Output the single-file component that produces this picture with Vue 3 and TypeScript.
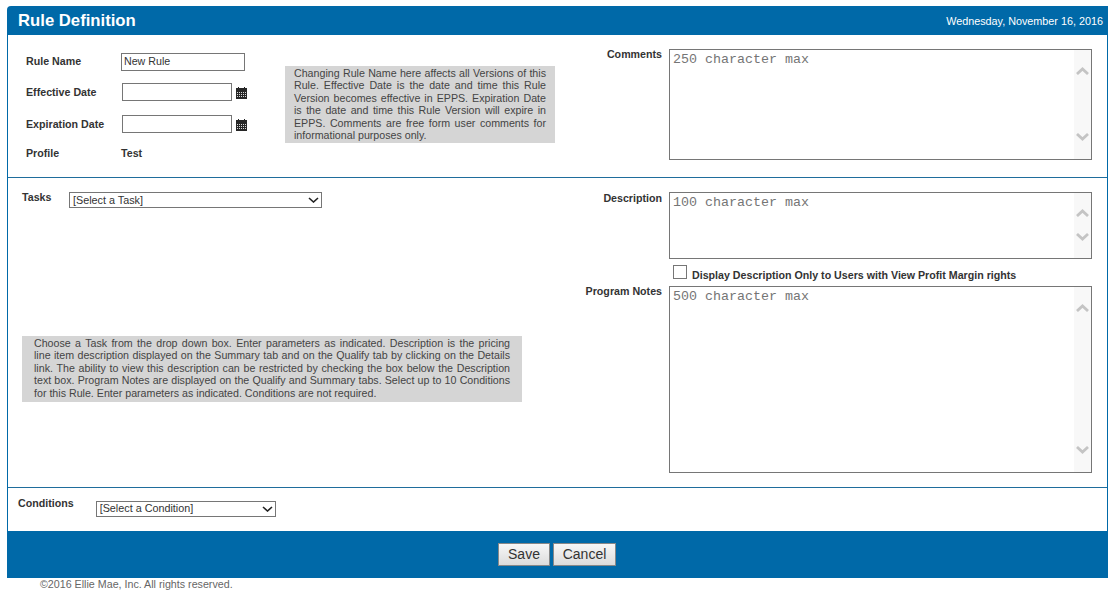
<script setup lang="ts">
const calendarCols: number[] = [1, 3, 5, 7, 9];
const calendarRows: number[] = [5, 7, 9];
const ruleNote: string[] = [
  "Changing Rule Name here affects all Versions of this",
  "Rule. Effective Date is the date and time this Rule",
  "Version becomes effective in EPPS. Expiration Date",
  "is the date and time this Rule Version will expire in",
  "EPPS. Comments are free form user comments for",
  "informational purposes only.",
];
const taskNote: string[] = [
  "Choose a Task from the drop down box. Enter parameters as indicated. Description is the pricing",
  "line item description displayed on the Summary tab and on the Qualify tab by clicking on the Details",
  "link. The ability to view this description can be restricted by checking the box below the Description",
  "text box. Program Notes are displayed on the Qualify and Summary tabs. Select up to 10 Conditions",
  "for this Rule. Enter parameters as indicated. Conditions are not required.",
];
</script>

<template>
  <div class="page">
    <header class="titlebar">
      <h1>Rule Definition</h1>
      <span class="date">Wednesday, November 16, 2016</span>
    </header>

    <div class="panel">
      <section class="sec sec-rule">
        <div class="rule-form">
          <div class="row row-name">
            <label class="lab">Rule Name</label>
            <input class="inp inp-name" value="New Rule" />
          </div>
          <div class="row row-date">
            <label class="lab">Effective Date</label>
            <input class="inp inp-date" />
            <svg class="cal" width="11" height="12" viewBox="0 0 11 12">
              <rect x="2" y="0" width="1" height="2" fill="#222" />
              <rect x="8" y="0" width="1" height="2" fill="#222" />
              <rect x="0" y="1" width="11" height="11" fill="#262626" />
              <template v-for="c in calendarCols" :key="c">
                <rect v-for="r in calendarRows" :key="r" :x="c" :y="r" width="1" height="1" fill="#d8d8d8" />
              </template>
            </svg>
          </div>
          <div class="row row-date">
            <label class="lab">Expiration Date</label>
            <input class="inp inp-date" />
            <svg class="cal" width="11" height="12" viewBox="0 0 11 12">
              <rect x="2" y="0" width="1" height="2" fill="#222" />
              <rect x="8" y="0" width="1" height="2" fill="#222" />
              <rect x="0" y="1" width="11" height="11" fill="#262626" />
              <template v-for="c in calendarCols" :key="c">
                <rect v-for="r in calendarRows" :key="r" :x="c" :y="r" width="1" height="1" fill="#d8d8d8" />
              </template>
            </svg>
          </div>
          <div class="row row-profile">
            <span class="lab">Profile</span>
            <span class="val">Test</span>
          </div>
        </div>

        <p class="note note-rule"><span v-for="line in ruleNote" :key="line" class="line">{{ line }}</span></p>

        <div class="field field-comments">
          <label class="side-lab">Comments</label>
          <div class="tbox tbox-comments">
            <textarea placeholder="250 character max"></textarea>
            <div class="sbar">
              <svg width="13" height="8" viewBox="0 0 13 8"><path d="M1 7 L6.5 2 L12 7" /></svg>
              <svg width="13" height="8" viewBox="0 0 13 8"><path d="M1 1 L6.5 6 L12 1" /></svg>
            </div>
          </div>
        </div>
      </section>

      <section class="sec sec-task">
        <div class="task-left">
          <div class="task-top">
            <label class="lab">Tasks</label>
            <div class="sel sel-task">
              <select><option>[Select a Task]</option></select>
              <svg class="chev" width="11" height="6" viewBox="0 0 11 6"><path d="M1 1 L5.5 5 L10 1" /></svg>
            </div>
          </div>
          <p class="note note-task"><span v-for="line in taskNote" :key="line" class="line">{{ line }}</span></p>
        </div>

        <div class="task-right">
          <div class="field">
            <label class="side-lab side-lab-desc">Description</label>
            <div class="tbox tbox-desc">
              <textarea placeholder="100 character max"></textarea>
              <div class="sbar">
                <svg width="13" height="8" viewBox="0 0 13 8"><path d="M1 7 L6.5 2 L12 7" /></svg>
                <svg width="13" height="8" viewBox="0 0 13 8"><path d="M1 1 L6.5 6 L12 1" /></svg>
              </div>
            </div>
          </div>
          <label class="check">
            <input type="checkbox" />
            <span>Display Description Only to Users with View Profit Margin rights</span>
          </label>
          <div class="field">
            <label class="side-lab">Program Notes</label>
            <div class="tbox tbox-notes">
              <textarea placeholder="500 character max"></textarea>
              <div class="sbar">
                <svg width="13" height="8" viewBox="0 0 13 8"><path d="M1 7 L6.5 2 L12 7" /></svg>
                <svg width="13" height="8" viewBox="0 0 13 8"><path d="M1 1 L6.5 6 L12 1" /></svg>
              </div>
            </div>
          </div>
        </div>
      </section>

      <section class="sec-cond">
        <label class="lab">Conditions</label>
        <div class="sel sel-cond">
          <select><option>[Select a Condition]</option></select>
          <svg class="chev" width="11" height="6" viewBox="0 0 11 6"><path d="M1 1 L5.5 5 L10 1" /></svg>
        </div>
      </section>
    </div>

    <footer class="actions">
      <button type="button" class="btn btn-save">Save</button>
      <button type="button" class="btn btn-cancel">Cancel</button>
    </footer>
    <p class="copy">©2016 Ellie Mae, Inc. All rights reserved.</p>
  </div>
</template>

<style>
html, body { margin: 0; background: #fff; }
</style>

<style scoped>
.page {
  width: 1101px;
  margin-left: 7px;
  padding-top: 6px;
  font-family: "Liberation Sans", Arial, sans-serif;
  color: #333;
}
.titlebar {
  height: 29px;
  background: #0069a8;
  border-top-left-radius: 4px;
  display: flex;
  align-items: center;
  justify-content: space-between;
  padding: 0 5px 0 11px;
  color: #fff;
}
.titlebar h1 { margin: 0; font-size: 16.7px; font-weight: bold; }
.date { font-size: 10.8px; }
.panel {
  border-left: 1px solid #0069a8;
  border-right: 1px solid #0069a8;
}
.sec { display: flex; border-bottom: 1px solid #1f6d9c; }
.sec-rule { height: 142px; position: relative; }
.rule-form { width: 277px; flex: none; padding: 18px 0 0 18px; box-sizing: border-box; }
.row { display: flex; align-items: center; }
.lab { font-size: 10.67px; font-weight: bold; color: #333; }
.row .lab { width: 96px; flex: none; }
.row-name { height: 18px; }
.row-name .lab { margin-bottom: 2px; }
.row-date { height: 18px; margin-top: 12px; }
.row-date + .row-date { margin-top: 14px; }
.row-profile { margin-top: 13px; height: 14px; }
.row-profile .lab { width: 95px; }
.val { font-size: 10.67px; font-weight: bold; color: #333; }
.inp {
  box-sizing: border-box;
  height: 18px;
  border: 1px solid #767676;
  padding: 0 2px 2px;
  font: 10.67px "Liberation Sans", Arial, sans-serif;
  color: #333;
  outline: none;
  background: #fff;
}
.inp-name { width: 124px; margin-left: -1px; }
.inp-date { width: 110px; }
.cal { margin-left: 4px; margin-top: 2px; flex: none; }
.note {
  margin: 0;
  background: #d5d5d5;
  font-size: 10.67px;
  line-height: 12.4px;
  color: #444;
  box-sizing: border-box;
}
.line { display: block; text-align: justify; text-align-last: justify; white-space: normal; }
.line:last-child { text-align-last: left; }
.note-rule {
  width: 270px;
  height: 77px;
  margin-top: 31px;
  padding: 1px 9px 0;
  flex: none;
}
.field-comments { margin: 14px 0 0 auto; padding-right: 15px; }
.field { display: flex; justify-content: flex-end; align-items: flex-start; }
.side-lab {
  font-size: 10.67px;
  font-weight: bold;
  color: #333;
  margin-right: 7px;
  margin-top: -1px;
  white-space: nowrap;
}
.side-lab-desc { margin-top: 0; }
.tbox {
  box-sizing: border-box;
  width: 423px;
  border: 1px solid #767676;
  display: flex;
  background: #fff;
}
.tbox textarea {
  flex: 1;
  min-width: 0;
  border: 0;
  outline: none;
  resize: none;
  padding: 2px 3px;
  margin: 0;
  font: 13.33px "Liberation Mono", "Courier New", monospace;
  line-height: 15px;
  overflow: hidden;
  background: transparent;
}
.tbox textarea::placeholder { color: #757575; opacity: 1; }
.sbar {
  width: 17px;
  flex: none;
  background: #f8f8f8;
  display: flex;
  flex-direction: column;
  justify-content: space-between;
  align-items: center;
  padding: 17px 0 18px;
  box-sizing: border-box;
}
.sbar path { fill: none; stroke: #c4c4c4; stroke-width: 2.8; }
.tbox-comments { height: 111px; }
.tbox-desc { height: 67px; }
.tbox-notes { height: 187px; }
.tbox-desc .sbar { padding: 16px 0 17px; }

.sec-task { height: 309px; }
.task-left { width: 560px; flex: none; box-sizing: border-box; padding: 14px 0 0 14px; }
.task-top { display: flex; align-items: flex-start; height: 144px; }
.task-top .lab { width: 47px; flex: none; margin-top: -1px; }
.sel { position: relative; box-sizing: border-box; flex: none; }
.sel select {
  appearance: none;
  display: block;
  width: 100%;
  height: 16px;
  box-sizing: border-box;
  border: 1px solid #767676;
  border-radius: 0;
  background: #fff;
  padding: 0 3px 1px;
  font: 10.8px "Liberation Sans", Arial, sans-serif;
  color: #333;
  outline: none;
}
.sel-cond select { padding-bottom: 2px; }
.chev { position: absolute; right: 3px; top: 5px; pointer-events: none; }
.chev path { fill: none; stroke: #222; stroke-width: 1.6; }
.sel-task { width: 253px; }
.sel-cond { width: 180px; margin-left: 22px; margin-top: 13px; }
.note-task {
  width: 500px;
  height: 66px;
  padding: 1px 12px 0;
}
.task-right {
  flex: 1;
  padding: 14px 15px 0 0;
  box-sizing: border-box;
}
.check {
  display: flex;
  align-items: center;
  margin-left: 105px;
  height: 14px;
  margin-top: 6px;
  margin-bottom: 7px;
  font-size: 10.67px;
  font-weight: bold;
  color: #333;
}
.check span { margin-top: 6px; }
.check input {
  appearance: none;
  width: 14px;
  height: 14px;
  margin: 0 5px 0 0;
  border: 1px solid #767676;
  background: #fff;
  flex: none;
}
.sec-cond { display: flex; align-items: flex-start; height: 43px; padding-left: 10px; box-sizing: border-box; }
.sec-cond .lab { margin-top: 9px; }
.actions {
  height: 47px;
  background: #0069a8;
  display: flex;
  justify-content: center;
  align-items: center;
  gap: 3px;
  padding-right: 1px;
  box-sizing: border-box;
}
.btn {
  height: 23px;
  box-sizing: border-box;
  border: 1px solid #888;
  background: linear-gradient(#f7f7f7, #dcdcdc);
  font: 14px "Liberation Sans", Arial, sans-serif;
  color: #333;
  padding: 0 0 2px;
}
.btn-save { width: 52px; }
.btn-cancel { width: 63px; }
.copy {
  margin: 0;
  padding: 0 0 0 33px;
  font-size: 10.7px;
  line-height: 13px;
  color: #666;
}
</style>
